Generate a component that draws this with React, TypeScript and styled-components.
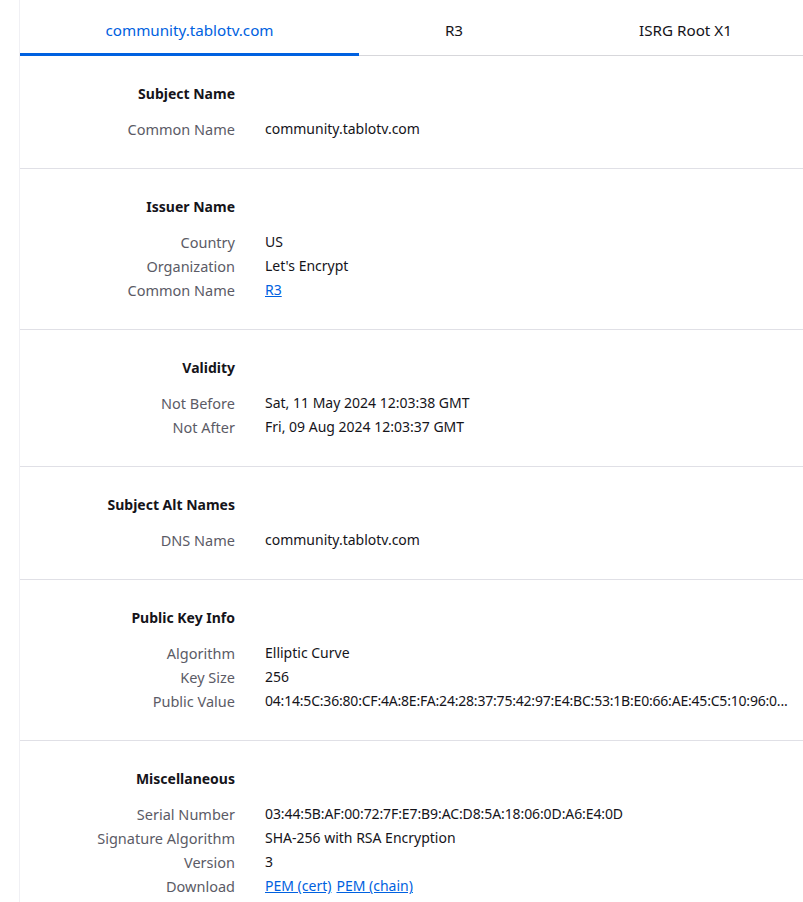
import React from 'react';
import styled, { createGlobalStyle } from 'styled-components';

const GlobalStyle = createGlobalStyle`
  html, body {
    margin: 0;
    padding: 0;
    background: #ffffff;
    overflow: hidden;
  }
  body {
    font-family: "Segoe UI", "Noto Sans", "Open Sans", sans-serif;
    color: #15141a;
  }
`;

const Page = styled.div`
  width: 803px;
  height: 902px;
  overflow: hidden;
  padding-left: 19px;
  box-sizing: border-box;
`;

const Viewer = styled.div`
  width: 802px;
  min-height: 902px;
  border-left: 1px solid #f0f0f4;
`;

const TabBar = styled.div`
  display: flex;
  height: 56px;
  border-bottom: 1px solid #d7d7db;
  box-sizing: border-box;
`;

const Tab = styled.div<{ $selected?: boolean; $width: number }>`
  flex: 0 0 ${p => p.$width}px;
  display: flex;
  align-items: center;
  justify-content: center;
  font-size: 15.2px;
  padding-top: 6px;
  box-sizing: border-box;
  color: ${p => (p.$selected ? '#0061e0' : '#15141a')};
  border-bottom: 3px solid ${p => (p.$selected ? '#0061e0' : 'transparent')};
  margin-bottom: -1px;
`;

const Section = styled.section`
  padding: 27px 0 27px;
  border-bottom: 1px solid #e0e0e6;
`;

const Grid = styled.div`
  display: grid;
  grid-template-columns: 215px 1fr;
  column-gap: 30px;
  padding-right: 16px;
`;

const Title = styled.h2`
  grid-column: 1;
  margin: 0 0 12px;
  font-size: 14px;
  line-height: 22px;
  font-weight: 700;
  text-align: right;
  color: #15141a;
`;

const Label = styled.div`
  grid-column: 1;
  text-align: right;
  font-size: 14.5px;
  line-height: 24px;
  height: 24px;
  color: #5b5b66;
  white-space: nowrap;
`;

const Value = styled.div<{ $tight?: number }>`
  grid-column: 2;
  font-size: 14px;
  line-height: 24px;
  height: 24px;
  color: #15141a;
  white-space: nowrap;
  min-width: 0;
  letter-spacing: ${p => (p.$tight ? `-${p.$tight}px` : 'normal')};
`;

const Link = styled.a`
  color: #0061e0;
  text-decoration: underline;
  margin-right: 5px;
`;

type Row = { label: string; value: React.ReactNode; tight?: number };

const sections: { title: string; rows: Row[] }[] = [
  {
    title: 'Subject Name',
    rows: [{ label: 'Common Name', value: 'community.tablotv.com' }],
  },
  {
    title: 'Issuer Name',
    rows: [
      { label: 'Country', value: 'US' },
      { label: 'Organization', value: "Let's Encrypt" },
      { label: 'Common Name', value: <Link href="#">R3</Link> },
    ],
  },
  {
    title: 'Validity',
    rows: [
      { label: 'Not Before', value: 'Sat, 11 May 2024 12:03:38 GMT' },
      { label: 'Not After', value: 'Fri, 09 Aug 2024 12:03:37 GMT' },
    ],
  },
  {
    title: 'Subject Alt Names',
    rows: [{ label: 'DNS Name', value: 'community.tablotv.com' }],
  },
  {
    title: 'Public Key Info',
    rows: [
      { label: 'Algorithm', value: 'Elliptic Curve' },
      { label: 'Key Size', value: '256' },
      {
        label: 'Public Value',
        value: '04:14:5C:36:80:CF:4A:8E:FA:24:28:37:75:42:97:E4:BC:53:1B:E0:66:AE:45:C5:10:96:0...',
        tight: 0.2,
      },
    ],
  },
  {
    title: 'Miscellaneous',
    rows: [
      {
        label: 'Serial Number',
        value: '03:44:5B:AF:00:72:7F:E7:B9:AC:D8:5A:18:06:0D:A6:E4:0D',
        tight: 0.1,
      },
      { label: 'Signature Algorithm', value: 'SHA-256 with RSA Encryption' },
      { label: 'Version', value: '3' },
      {
        label: 'Download',
        value: (
          <>
            <Link href="#">PEM (cert)</Link>
            <Link href="#">PEM (chain)</Link>
          </>
        ),
      },
    ],
  },
];

const App = () => {
  return (
    <>
      <GlobalStyle />
      <Page>
        <Viewer>
          <TabBar>
            <Tab $selected $width={339}>community.tablotv.com</Tab>
            <Tab $width={190}>R3</Tab>
            <Tab $width={273}>ISRG Root X1</Tab>
          </TabBar>
          {sections.map(s => (
            <Section key={s.title}>
              <Grid>
                <Title>{s.title}</Title>
                {s.rows.map(r => (
                  <React.Fragment key={r.label}>
                    <Label>{r.label}</Label>
                    <Value $tight={r.tight}>{r.value}</Value>
                  </React.Fragment>
                ))}
              </Grid>
            </Section>
          ))}
        </Viewer>
      </Page>
    </>
  );
};

export default App;
